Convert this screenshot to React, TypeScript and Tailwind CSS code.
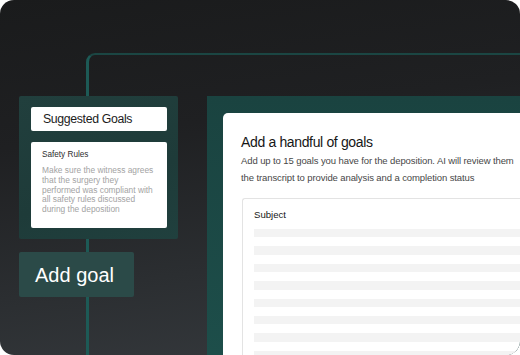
import React from "react";

export default function App() {
  const bars = Array.from({ length: 8 });
  return (
    <div className="w-[520px] h-[355px] bg-white overflow-hidden" style={{ fontFamily: '"Liberation Sans", Arial, sans-serif' }}>
      <div className="relative h-full rounded-[14px] overflow-hidden bg-[linear-gradient(172deg,#1a1b1c_0%,#1f2022_35%,#2b2e31_70%,#363a3e_100%)]">
        <div className="absolute left-[86px] top-[53px] w-[500px] h-[400px] rounded-tl-[9px] border-t-2 border-l-[3px] border-t-[#1b4643] border-l-[#1d5a56]" />
        <div className="relative flex h-full pt-[96px] pl-[19px]">
          <div className="flex flex-col w-[159px] shrink-0">
            <div className="h-[143px] rounded-[2px] bg-[linear-gradient(160deg,#213f3d_0%,#1e3b39_60%,#20403e_100%)] pt-[11px] pl-[12px] pr-[11px] flex flex-col gap-[11px]">
              <div className="h-[24px] bg-white rounded-[2px] pl-[12px] flex items-center text-[12.3px] tracking-[-0.35px] text-[#1c1c1c]">
                Suggested Goals
              </div>
              <div className="h-[86px] bg-white rounded-[2px] pl-[11px] pt-[8px]">
                <div className="text-[8.2px] leading-[10px] font-medium text-[#2e2e2e]">Safety Rules</div>
                <div className="mt-[6px] text-[8.4px] leading-[9.8px] text-[#a3a3a3] whitespace-nowrap">
                  Make sure the witness agrees
                  <br />
                  that the surgery they
                  <br />
                  performed was compliant with
                  <br />
                  all safety rules discussed
                  <br />
                  during the deposition
                </div>
              </div>
            </div>
            <div className="mt-[13px] w-[115px] h-[45px] rounded-[2px] bg-[#2b4a48] pl-[16px] flex items-center text-[20px] text-white">
              Add goal
            </div>
          </div>
          <div className="ml-[29px] flex-1 bg-[linear-gradient(180deg,#1a4340_0%,#1d4e4a_100%)] pt-[17px] pl-[16px]">
            <div className="h-full bg-white rounded-tl-[5px] pl-[18px] pt-[19px]">
              <div className="text-[14px] leading-[20px] tracking-[-0.35px] text-[#161616] whitespace-nowrap">Add a handful of goals</div>
              <div className="text-[9.5px] leading-[17px] tracking-[-0.1px] text-[#474747] whitespace-nowrap">
                Add up to 15 goals you have for the deposition. AI will review them
                <br />
                the transcript to provide analysis and a completion status
              </div>
              <div className="mt-[12px] ml-[1px] h-[200px] border-t border-l border-[#e3e3e3] rounded-tl-[3px] pl-[11px] pt-[9px]">
                <div className="text-[9.6px] leading-[14px] text-[#161616]">Subject</div>
                <div className="mt-[7px] flex flex-col gap-[9px]">
                  {bars.map((_, i) => (
                    <div key={i} className="h-[8.4px] bg-[#f3f3f3]" />
                  ))}
                </div>
              </div>
            </div>
          </div>
        </div>
      </div>
    </div>
  );
}
